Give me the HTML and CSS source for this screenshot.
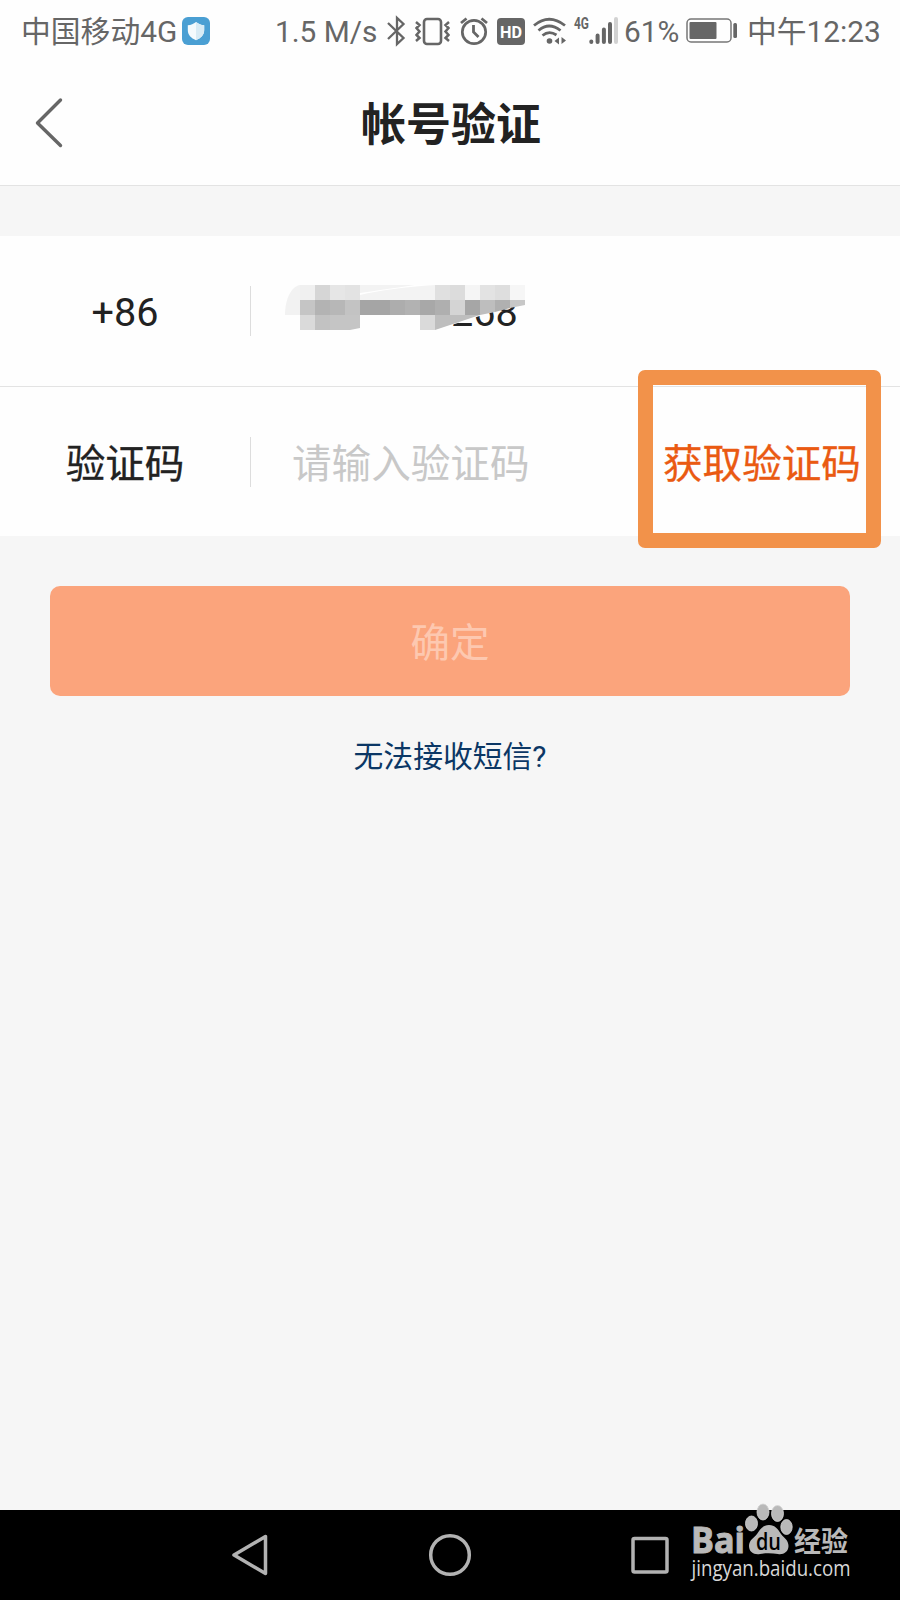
FILE: index.html
```html
<!DOCTYPE html>
<html lang="zh-CN">
<head>
    <meta charset="UTF-8">
    <meta name="viewport" content="width=device-width, initial-scale=1.0">
    <title>帐号验证</title>
    <link rel="stylesheet" href="styles.css">
</head>
<body>
    <div class="status-bar">
        <span class="carrier">中国移动4G</span>
        <svg class="shield" width="28" height="28" viewBox="0 0 28 28">
            <rect width="28" height="28" rx="6" fill="#4a9fd3"/>
            <path d="M14 5 C11.500 7 9 8 5.800 8.300 V13 C5.800 18 9 21 14 23.200 C19 21 22.200 18 22.200 13 V8.300 C19 8 16.500 7 14 5Z" fill="#f4fafd"/>
            <path d="M14 5 C16.500 7 19 8 22.200 8.300 V13 C22.200 18 19 21 14 23.200Z" fill="#d8ebf5"/>
        </svg>
        <span class="speed">1.5 M/s</span>
        <svg class="icons" width="232" height="32" viewBox="386 14 232 32" fill="none" stroke="#666" stroke-width="2.300">
            <!-- bluetooth -->
            <path d="M388 22 L403.500 37 L397 43 V17 L403.500 23 L388 38"/>
            <!-- vibrate -->
            <rect x="424" y="18" width="17" height="25" rx="3" stroke-width="2.600"/>
            <path d="M416 21 L419.500 24 L416.500 27 L419.500 30.500 L416.500 34 L419.500 37 L416 40 M449 21 L445.500 24 L448.500 27 L445.500 30.500 L448.500 34 L445.500 37 L449 40" stroke-width="2.500"/>
            <!-- alarm -->
            <circle cx="474" cy="31" r="11.700" stroke-width="2.700"/>
            <path d="M473.500 24 V31 L478.500 36" stroke-width="2.800"/>
            <path d="M461 22 L466.500 17.500 M487 22 L481.500 17.500" stroke-width="2.800"/>
            <!-- hd -->
            <rect x="497" y="17" width="28" height="27" rx="4" fill="#666" stroke="none"/>
            <text class="hd" x="500" y="36.500" textLength="22" lengthAdjust="spacingAndGlyphs">HD</text>
            <!-- wifi -->
            <path d="M534 24.500 Q549 12 565 24.500 M538.500 29.500 Q549 20.500 560.500 29.500 M542.500 34.500 Q549 29 556.500 34" stroke-width="2.800"/>
            <circle cx="549.500" cy="40" r="2.800" fill="#666" stroke="none"/>
            <path d="M554.500 40 L559 36.500 V43.500Z M566 39.500 L561.500 36 V43Z" fill="#666" stroke="none"/>
            <!-- signal -->
            <text class="net" x="574" y="27.500" textLength="15" lengthAdjust="spacingAndGlyphs">4G</text>
            <g stroke-width="4" stroke-linecap="round">
                <path d="M591.300 40.500 V41 M597.600 34.500 V41 M603.900 28.500 V41 M610 23 V41"/>
                <path d="M616 18 V41" stroke="#d2d2d2"/>
            </g>
        </svg>
        <span class="percent">61%</span>
        <svg class="battery" width="52" height="26" viewBox="0 0 52 26">
            <rect x="1" y="1" width="44" height="23" rx="4" fill="none" stroke="#777" stroke-width="1.500"/>
            <rect x="3.500" y="4" width="27" height="17" rx="1" fill="#666"/>
            <rect x="47.300" y="5" width="3.700" height="15" rx="1.500" fill="#666"/>
        </svg>
        <span class="time">中午12:23</span>
    </div>

    <div class="header">
        <svg class="back" width="30" height="52" viewBox="0 0 30 52">
            <path d="M26.500 3 L3.500 26 L26.500 48.500" fill="none" stroke="#666" stroke-width="3.400" stroke-linecap="round" stroke-linejoin="round"/>
        </svg>
        <h1>帐号验证</h1>
    </div>

    <div class="form">
        <div class="row phone">
            <span class="label"><span>+86</span></span>
            <div class="number">
                <span>268</span>
                <svg class="mosaic" width="320" height="80" viewBox="260 260 320 80">
                    <path d="M264 316 C275 305 290 300 320 285 L520 270 L570 275 L520 303 L436 330 L300 335 L264 335Z" fill="#fefefe"/>
                    <path d="M285 315 C285 298 292 286 300 285 V315Z" fill="#f2f2f2"/>
                    <g shape-rendering="crispEdges">
                        <path d="M300 285h15v15h-15z" fill="#f0f0f0"/>
                        <path d="M315 285h15v15h-15z" fill="#d6d6d6"/>
                        <path d="M330 285h15v15h-15z" fill="#e6e6e6"/>
                        <path d="M345 285h15v15h-15z" fill="#e3e3e3"/>
                        <path d="M360 285h75v15h-75z" fill="#f3f3f3"/>
                        <path d="M435 285h15v15h-15z" fill="#e0e0e0"/>
                        <path d="M450 285h15v15h-15z" fill="#dcdcdc"/>
                        <path d="M465 285h15v15h-15z" fill="#f5f5f5"/>
                        <path d="M480 285h15v15h-15z" fill="#e3e3e3"/>
                        <path d="M495 285h15v15h-15z" fill="#dedede"/>
                        <path d="M510 285h15v15h-15z" fill="#f6f6f6"/>
                        <path d="M300 300h15v15h-15z" fill="#c5c5c5"/>
                        <path d="M315 300h15v15h-15z" fill="#b3b3b3"/>
                        <path d="M330 300h15v15h-15z" fill="#b7b7b7"/>
                        <path d="M345 300h15v15h-15z" fill="#c3c3c3"/>
                        <path d="M360 300h30v15h-30z" fill="#a5a5a5"/>
                        <path d="M390 300h15v15h-15z" fill="#adadad"/>
                        <path d="M405 300h15v15h-15z" fill="#b2b2b2"/>
                        <path d="M420 300h15v15h-15z" fill="#a8a8a8"/>
                        <path d="M435 300h15v15h-15z" fill="#afafaf"/>
                        <path d="M450 300h15v15h-15z" fill="#d4d4d4"/>
                        <path d="M300 315h15v15h-15z" fill="#dadada"/>
                        <path d="M315 315h15v15h-15z" fill="#c2c2c2"/>
                        <path d="M420 315h15v15h-15z" fill="#dadada"/>
                    </g>
                    <path d="M465 300h15v15h-15z" fill="#a6a6a6"/>
                    <path d="M480 300h15v12l-15 3z" fill="#bebebe"/>
                    <path d="M495 300h15v8l-15 4z" fill="#b0b0b0"/>
                    <path d="M510 300h15v5l-15 3z" fill="#c7c7c7"/>
                    <path d="M330 315h30v13l-10 2h-20z" fill="#c5c5c5"/>
                    <path d="M435 315h30v5l-30 10z" fill="#bebebe"/>
                    <path d="M465 315h15l-15 5z" fill="#bebebe"/>
                    <path d="M360 295 Q390 288 435 285 H415 Q380 290 360 293Z" fill="#fff"/>
                </svg>
            </div>
        </div>
        <div class="row code">
            <span class="label">验证码</span>
            <span class="placeholder">请输入验证码</span>
            <span class="get-code">获取验证码</span>
            <div class="highlight"></div>
        </div>
    </div>

    <button class="submit">确定</button>
    <a class="help">无法接收短信?</a>

    <div class="nav-bar">
        <svg class="nav-icons" width="450" height="90" viewBox="225 1510 450 90" fill="none" stroke="#b2b2b2" stroke-width="3.500" stroke-linejoin="round">
            <path d="M234 1555 L265.500 1536.500 V1573.500Z"/>
            <circle cx="450" cy="1555" r="19.300"/>
            <rect x="633" y="1538.500" width="34" height="33.500" rx="1.500"/>
        </svg>
        <svg class="watermark" width="170" height="100" viewBox="686 1500 170 100">
            <g fill="#b9b9b9">
                <text class="bai" x="691" y="1553" textLength="54" lengthAdjust="spacingAndGlyphs">Bai</text>
                <text class="jy" x="794" y="1551.500" textLength="54" lengthAdjust="spacingAndGlyphs">经验</text>
                <g stroke="#d4d4d4" stroke-width="0.800">
                    <ellipse cx="751.500" cy="1523.500" rx="6" ry="7.500"/>
                    <ellipse cx="763" cy="1512" rx="6" ry="8"/>
                    <ellipse cx="777.500" cy="1513.500" rx="6" ry="8"/>
                    <ellipse cx="786.500" cy="1527" rx="5.700" ry="7.500"/>
                </g>
                <path d="M769 1525 C775 1525 778 1529 781 1534 C784 1538 788.500 1540 788.500 1546 C788.500 1552 783 1555 778 1554 C772 1553 765 1553 760 1554 C754 1555 749 1552 749 1546 C749 1540 754 1538 757 1534 C760 1529 763 1525 769 1525Z"/>
            </g>
            <text class="du" x="756" y="1549.500" textLength="25" lengthAdjust="spacingAndGlyphs">du</text>
            <text class="url" x="691.500" y="1575.500" textLength="159" lengthAdjust="spacingAndGlyphs">jingyan.baidu.com</text>
        </svg>
    </div>
</body>
</html>
```
FILE: styles.css
```css
* {
    box-sizing: border-box;
}
body {
    font-family: Roboto, "Noto Sans CJK SC", sans-serif;
    background-color: #f6f6f6;
    color: #222;
    margin: 0;
    height: 1600px;
    display: flex;
    flex-direction: column;
    overflow: hidden;
}
svg {
    display: block;
    flex: none;
}
.status-bar {
    height: 62px;
    padding-left: 21px;
    background-color: #fefefe;
    color: #666;
    display: flex;
    align-items: center;
    font-size: 29.800px;
    line-height: 62px;
    white-space: nowrap;
}
.status-bar span {
    flex: none;
    padding-top: 1px;
}
.carrier {
    width: 161px;
}
.speed {
    width: 111px;
    margin-left: 65px;
}
.percent {
    width: 62px;
    margin-left: 6px;
}
.battery {
    margin-right: 9px;
}
.hd {
    font: bold 17px Roboto, sans-serif;
    fill: #fff;
    stroke: none;
}
.net {
    font: bold 16px Roboto, sans-serif;
    fill: #666;
    stroke: none;
}
.header {
    height: 124px;
    background-color: #fefefe;
    border-bottom: 1px solid #e3e3e3;
    display: grid;
    grid-template-columns: 100px 1fr 100px;
    align-items: center;
}
.back {
    margin-left: 34px;
    margin-top: -2px;
}
h1 {
    margin: 0;
    padding: 5px 0 0 2px;
    font-size: 45px;
    font-weight: bold;
    line-height: 66px;
    text-align: center;
}
.form {
    margin-top: 50px;
    background-color: #fefefe;
}
.row {
    position: relative;
    height: 150px;
    display: grid;
    grid-template-columns: 251px 394px 1fr;
    align-items: center;
    font-size: 39.600px;
}
.phone {
    height: 151px;
    border-bottom: 1px solid #e3e3e3;
}
.code {
    height: 149px;
}
.label {
    height: 50px;
    line-height: 55px;
    text-align: center;
    border-right: 1px solid #ddd;
    -webkit-text-stroke: 0.300px;
}
.phone .label {
    line-height: 53px;
    -webkit-text-stroke: 0;
}
.number {
    position: relative;
    height: 50px;
    line-height: 54px;
    padding-left: 200px;
}
.mosaic {
    position: absolute;
    left: 9px;
    top: -26px;
}
.placeholder {
    height: 50px;
    line-height: 56px;
    padding-left: 41px;
    color: #c8c8c8;
}
.get-code {
    height: 50px;
    line-height: 56px;
    padding-left: 18px;
    color: #ea5a12;
    white-space: nowrap;
    -webkit-text-stroke: 0.300px;
}
.highlight {
    position: absolute;
    left: 638px;
    top: -17px;
    width: 243px;
    height: 178px;
    border: 15px solid #f2924a;
    border-radius: 7px;
}
.submit {
    height: 110px;
    margin: 50px 50px 0;
    padding: 0 0 4px;
    border: none;
    border-radius: 10px;
    background-color: #fba47c;
    color: #fdc8b0;
    font-family: inherit;
    font-size: 39.500px;
}
.help {
    margin-top: 40px;
    font-size: 29.800px;
    line-height: 41px;
    text-align: center;
    color: #0b3765;
}
.nav-bar {
    margin-top: auto;
    height: 90px;
    background-color: #000;
    display: flex;
}
.nav-icons {
    margin-left: 225px;
}
.watermark {
    margin-left: 11px;
    margin-top: -10px;
}
.bai {
    font: bold 36px "Open Sans", sans-serif;
    stroke: #b9b9b9;
    stroke-width: 1px;
}
.jy {
    font: bold 28px "Noto Sans CJK SC", sans-serif;
}
.du {
    font: 600 23px "Open Sans", sans-serif;
    fill: #000;
}
.url {
    font: 21.500px "Open Sans", sans-serif;
    fill: #d8d8d8;
}
```
